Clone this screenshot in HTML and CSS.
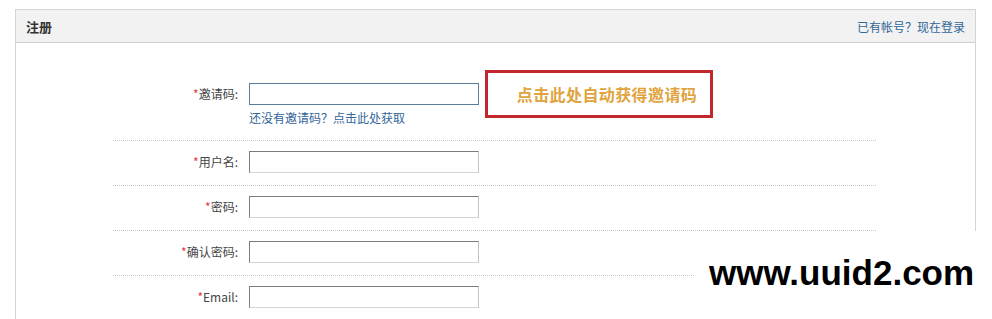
FILE: index.html
```html
<!DOCTYPE html>
<html lang="zh-CN">
<head>
    <meta charset="UTF-8">
    <title>注册</title>
    <link rel="stylesheet" href="styles.css">
</head>
<body>
    <div class="panel">
        <div class="panel-head">
            <span class="panel-title">注册</span>
            <a class="login-link" href="#">已有帐号？现在登录</a>
        </div>
        <form class="reg-form">
            <div class="row row-first">
                <label class="label"><em>*</em>邀请码:</label>
                <div class="field">
                    <input type="text" class="text-input focus">
                    <a class="hint" href="#">还没有邀请码？点击此处获取</a>
                </div>
                <a class="auto-code" href="#">点击此处自动获得邀请码</a>
            </div>
            <div class="row">
                <label class="label"><em>*</em>用户名:</label>
                <div class="field"><input type="text" class="text-input"></div>
            </div>
            <div class="row">
                <label class="label"><em>*</em>密码:</label>
                <div class="field"><input type="password" class="text-input"></div>
            </div>
            <div class="row">
                <label class="label"><em>*</em>确认密码:</label>
                <div class="field"><input type="password" class="text-input"></div>
            </div>
            <div class="row">
                <label class="label"><em>*</em>Email:</label>
                <div class="field"><input type="text" class="text-input"></div>
            </div>
        </form>
    </div>
    <div class="watermark">www.uuid2.com</div>
</body>
</html>
```

FILE: styles.css
```css
body {
    margin: 0;
    background: #fff;
    font-family: "Microsoft YaHei", "Noto Sans CJK SC", sans-serif;
    font-size: 12px;
    color: #333;
    overflow: hidden;
}
.panel {
    width: 961px;
    height: 320px;
    margin: 9px 0 0 15px;
    border: 1px solid #d4d4d4;
    box-sizing: border-box;
}
.panel-head {
    display: flex;
    justify-content: space-between;
    align-items: center;
    height: 33px;
    padding: 0 10px 0 10px;
    background: #f2f2f2;
    border-bottom: 1px solid #cfcfcf;
    box-sizing: border-box;
}
.panel-title {
    font-size: 13px;
    font-weight: bold;
    color: #333;
}
.login-link {
    color: #336699;
    text-decoration: none;
}
.reg-form {
    width: 763px;
    margin-left: 97px;
}
.row {
    display: flex;
    align-items: flex-start;
    padding: 10px 0 12px;
    border-bottom: 1px dotted #c8c8c8;
}
.row-first {
    padding-top: 40px;
    padding-bottom: 13px;
}
.label {
    width: 125px;
    margin-right: 11px;
    text-align: right;
    line-height: 22px;
    color: #444;
}
.label em {
    font-style: normal;
    color: #e0393e;
}
.field {
    display: flex;
    flex-direction: column;
}
.text-input {
    width: 230px;
    height: 22px;
    margin: 0;
    padding: 0 3px;
    box-sizing: border-box;
    border: 1px solid;
    border-color: #7c7c7c #c3c3c3 #d4d4d4 #7c7c7c;
    background: #fff;
}
.text-input.focus {
    border-color: #5b7c99;
}
.hint {
    margin-top: 4px;
    line-height: 18px;
    color: #336699;
    text-decoration: none;
}
.auto-code {
    display: flex;
    align-items: center;
    justify-content: center;
    width: 228px;
    height: 48px;
    margin: -13px 0 0 6px;
    padding-left: 16px;
    border: 3px solid #c1272d;
    box-sizing: border-box;
    font-size: 16px;
    font-weight: bold;
    letter-spacing: 0.4px;
    color: #e0a33d;
    text-decoration: none;
}
.watermark {
    position: absolute;
    left: 695px;
    top: 231px;
    width: 297px;
    height: 88px;
    padding-left: 14px;
    box-sizing: border-box;
    background: #fff;
    font-family: "Liberation Sans", Arial, sans-serif;
    font-size: 35px;
    font-weight: bold;
    line-height: 84px;
    color: #000;
}
```
